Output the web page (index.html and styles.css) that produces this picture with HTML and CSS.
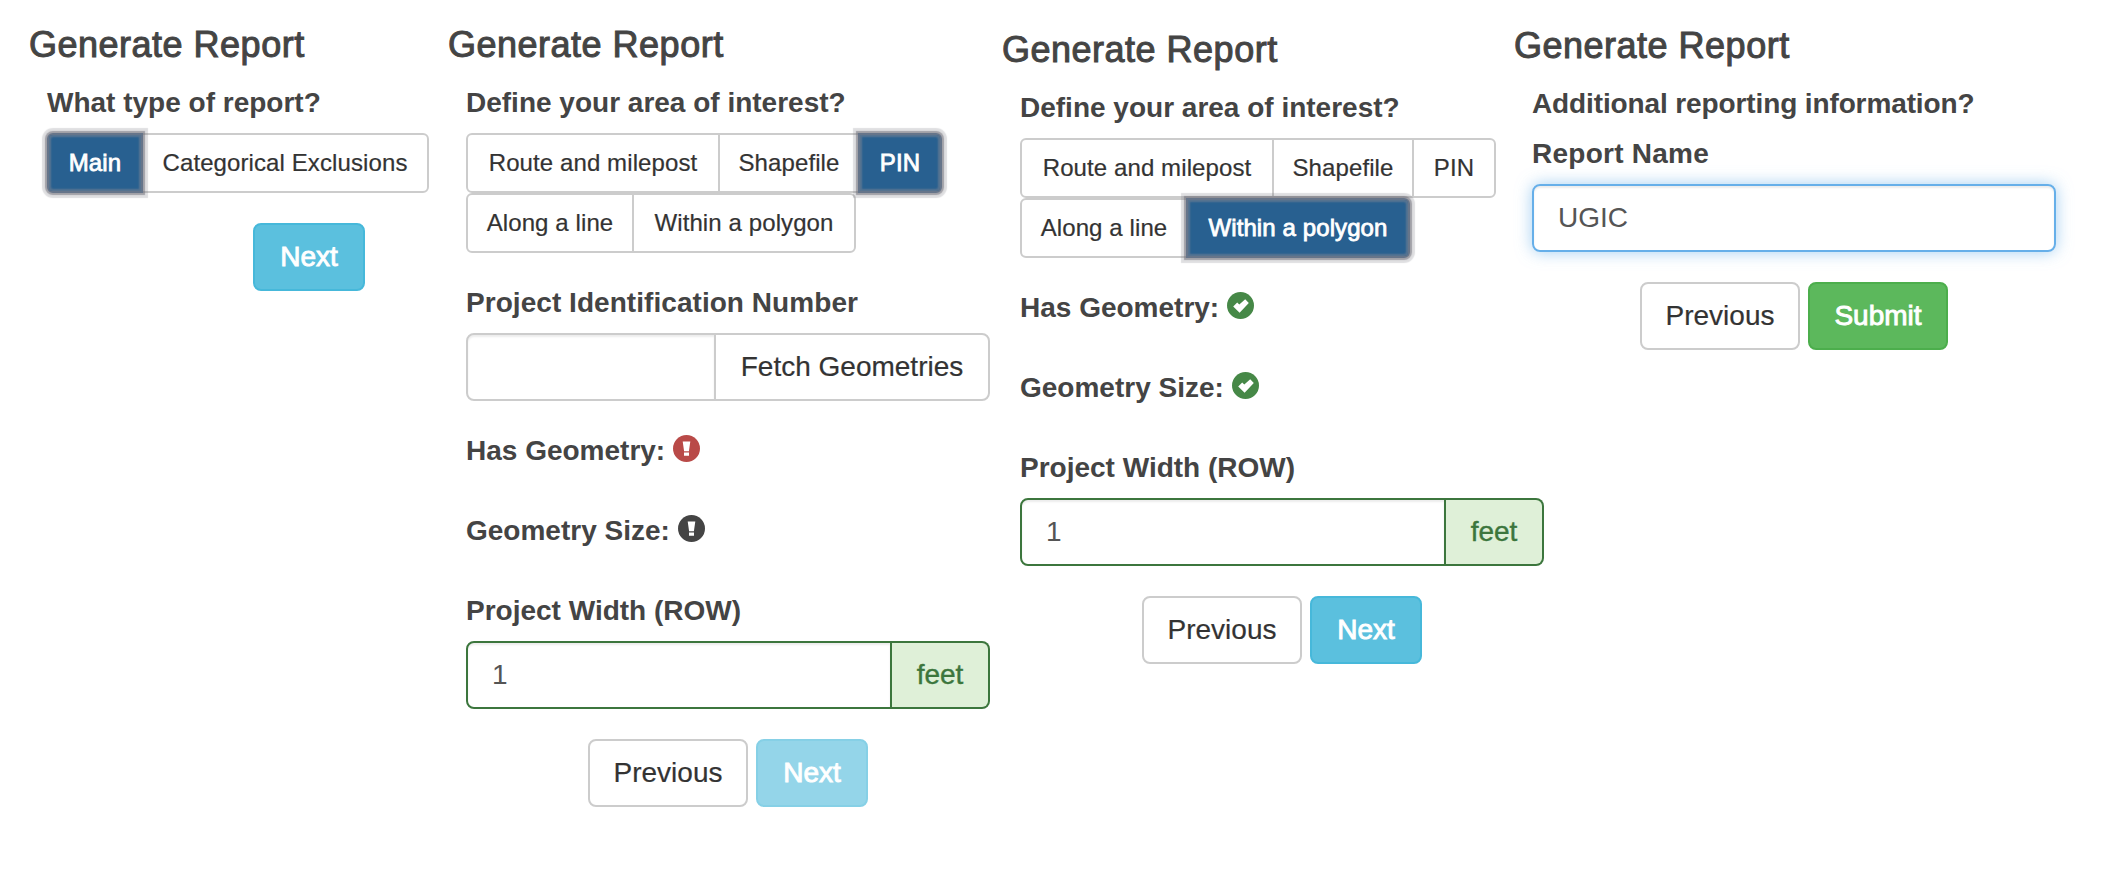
FILE: index.html
```html
<!DOCTYPE html>
<html lang="en">
<head>
<meta charset="utf-8">
<title>Generate Report</title>
<link rel="stylesheet" href="styles.css">
</head>
<body>
<svg class="defs" aria-hidden="true">
  <symbol id="alert" viewBox="0 0 27 27">
    <circle cx="13.5" cy="13.5" r="13.5"/>
    <path fill="#fff" d="M9.7 6.6h7.6l-1.4 9.6h-4.8zM11 17.6h5v3.1h-5z"/>
  </symbol>
  <symbol id="ok" viewBox="0 0 27 27">
    <circle cx="13.5" cy="13.5" r="13.5"/>
    <path fill="#fff" d="M6.2 14.6l4-4 2.1 2 5.9-5.3 3.6 3.7-9.2 9.7z"/>
  </symbol>
</svg>
<main class="board">
  <section class="panel panel-type">
    <h3 class="title">Generate Report</h3>
    <form class="form">
      <label class="label">What type of report?</label>
      <div class="choices">
        <div class="group">
          <button type="button" class="choice active w-main">Main</button>
          <button type="button" class="choice w-exclusions">Categorical Exclusions</button>
        </div>
      </div>
      <div class="actions"><button type="button" class="btn info">Next</button></div>
    </form>
  </section>

  <section class="panel panel-pin">
    <h3 class="title">Generate Report</h3>
    <form class="form">
      <label class="label">Define your area of interest?</label>
      <div class="choices">
        <div class="group">
          <button type="button" class="choice w-route">Route and milepost</button>
          <button type="button" class="choice w-shape">Shapefile</button>
          <button type="button" class="choice active w-pin">PIN</button>
        </div>
        <div class="group">
          <button type="button" class="choice w-line">Along a line</button>
          <button type="button" class="choice w-polygon">Within a polygon</button>
        </div>
      </div>
      <label class="label wide">Project Identification Number</label>
      <div class="field">
        <div class="input"></div>
        <button type="button" class="btn fetch">Fetch Geometries</button>
      </div>
      <div class="label status">Has Geometry: <svg class="icon danger"><use href="#alert"/></svg></div>
      <div class="label status">Geometry Size: <svg class="icon"><use href="#alert"/></svg></div>
      <label class="label">Project Width (ROW)</label>
      <div class="field success">
        <div class="input">1</div>
        <span class="addon">feet</span>
      </div>
      <div class="actions">
        <button type="button" class="btn">Previous</button>
        <button type="button" class="btn info disabled">Next</button>
      </div>
    </form>
  </section>

  <section class="panel panel-polygon">
    <h3 class="title">Generate Report</h3>
    <form class="form">
      <label class="label">Define your area of interest?</label>
      <div class="choices">
        <div class="group">
          <button type="button" class="choice w-route">Route and milepost</button>
          <button type="button" class="choice w-shape">Shapefile</button>
          <button type="button" class="choice w-pin">PIN</button>
        </div>
        <div class="group">
          <button type="button" class="choice w-line">Along a line</button>
          <button type="button" class="choice active w-polygon">Within a polygon</button>
        </div>
      </div>
      <div class="label status">Has Geometry: <svg class="icon good"><use href="#ok"/></svg></div>
      <div class="label status">Geometry Size: <svg class="icon good"><use href="#ok"/></svg></div>
      <label class="label">Project Width (ROW)</label>
      <div class="field success">
        <div class="input">1</div>
        <span class="addon">feet</span>
      </div>
      <div class="actions">
        <button type="button" class="btn">Previous</button>
        <button type="button" class="btn info">Next</button>
      </div>
    </form>
  </section>

  <section class="panel panel-submit">
    <h3 class="title">Generate Report</h3>
    <form class="form">
      <label class="label tight">Additional reporting information?</label>
      <label class="label loose">Report Name</label>
      <div class="field focused"><div class="input">UGIC</div></div>
      <div class="actions">
        <button type="button" class="btn">Previous</button>
        <button type="button" class="btn submit">Submit</button>
      </div>
    </form>
  </section>
</main>
</body>
</html>
```
FILE: styles.css
```css
* { box-sizing: border-box; }

body {
  margin: 0;
  background: #fff;
  color: #444;
  font: 28px/40px "Liberation Sans", Arial, sans-serif;
  overflow: hidden;
}

button { font-family: inherit; margin: 0; white-space: nowrap; }

.defs { display: none; }

.board { display: flex; height: 890px; padding-left: 29px; }

.panel { flex: none; padding-top: 25px; }
.panel-type { width: 419px; }
.panel-pin { width: 554px; }
.panel-polygon { width: 512px; padding-top: 30px; }
.panel-submit { width: 560px; padding-top: 26px; }

.title {
  margin: 0 0 18px;
  font-size: 36px;
  line-height: 40px;
  font-weight: 400;
  letter-spacing: 0.5px;
  -webkit-text-stroke: 1px #444;
}

.form { width: 524px; margin-left: 18px; }

.label {
  display: block;
  height: 40px;
  margin-bottom: 10px;
  font-weight: 700;
  white-space: nowrap;
}
.label.wide { letter-spacing: 0.05px; }
.label.tight { letter-spacing: -0.12px; }
.label.loose { letter-spacing: 0.25px; }

.status { display: flex; gap: 8px; margin-bottom: 40px; }
.icon { width: 27px; height: 27px; margin-top: 4px; fill: #444; }
.icon.danger { fill: #b94a48; }
.icon.good { fill: #468847; }

.choices { margin-bottom: 30px; }
.group { display: flex; }

.choice {
  height: 60px;
  padding: 0;
  border: 2px solid #ccc;
  background: #fff;
  color: #333;
  font-size: 24px;
  line-height: 36px;
  letter-spacing: 0.1px;
  -webkit-text-stroke: 0.2px #333;
}
.choice + .choice { margin-left: -2px; }
.choice:first-child { border-radius: 6px 0 0 6px; }
.choice:last-child { border-radius: 0 6px 6px 0; }
.choice.active {
  position: relative;
  border-color: #66758a;
  background: #286090;
  color: #fff;
  -webkit-text-stroke: 0.8px #fff;
  box-shadow: inset 0 0 2px 2px rgba(120, 130, 145, 0.6),
    0 0 1px 2px rgba(110, 110, 120, 0.55), 0 0 1px 5px rgba(110, 110, 120, 0.22);
}

.w-main { width: 96px; }
.w-exclusions { width: 288px; }
.w-route { width: 254px; }
.w-shape { width: 142px; }
.w-pin { width: 84px; }
.w-line { width: 168px; }
.w-polygon { width: 224px; }

.field { display: flex; height: 68px; margin-bottom: 30px; }
.input {
  flex: 1;
  padding: 12px 24px;
  border: 2px solid #ccc;
  border-radius: 8px;
  color: #555;
  box-shadow: inset 0 2px 2px rgba(0, 0, 0, 0.075);
}
.input:not(:last-child) { border-radius: 8px 0 0 8px; }

.addon {
  width: 98px;
  padding: 12px 0;
  border: 2px solid #3c763d;
  border-left: 0;
  border-radius: 0 8px 8px 0;
  background: #dff0d8;
  color: #3c763d;
  text-align: center;
  -webkit-text-stroke: 0.4px #3c763d;
}
.success .input { border-color: #3c763d; }

.focused .input {
  border-color: #66afe9;
  box-shadow: inset 0 2px 2px rgba(0, 0, 0, 0.075), 0 0 16px rgba(102, 175, 233, 0.6);
}

.btn {
  width: 160px;
  height: 68px;
  padding: 0;
  border: 2px solid #ccc;
  border-radius: 8px;
  background: #fff;
  color: #333;
  font-size: 28px;
  line-height: 40px;
  -webkit-text-stroke: 0.2px #333;
}
.btn.fetch {
  width: 276px;
  margin-left: -2px;
  border-radius: 0 8px 8px 0;
}
.btn.info,
.btn.submit { color: #fff; -webkit-text-stroke: 0.9px #fff; }
.btn.info { width: 112px; border-color: #46b8da; background: #5bc0de; }
.btn.submit { width: 140px; border-color: #4cae4c; background: #5cb85c; }
.btn.disabled { opacity: 0.65; }

.actions { display: flex; justify-content: center; gap: 8px; }
```
